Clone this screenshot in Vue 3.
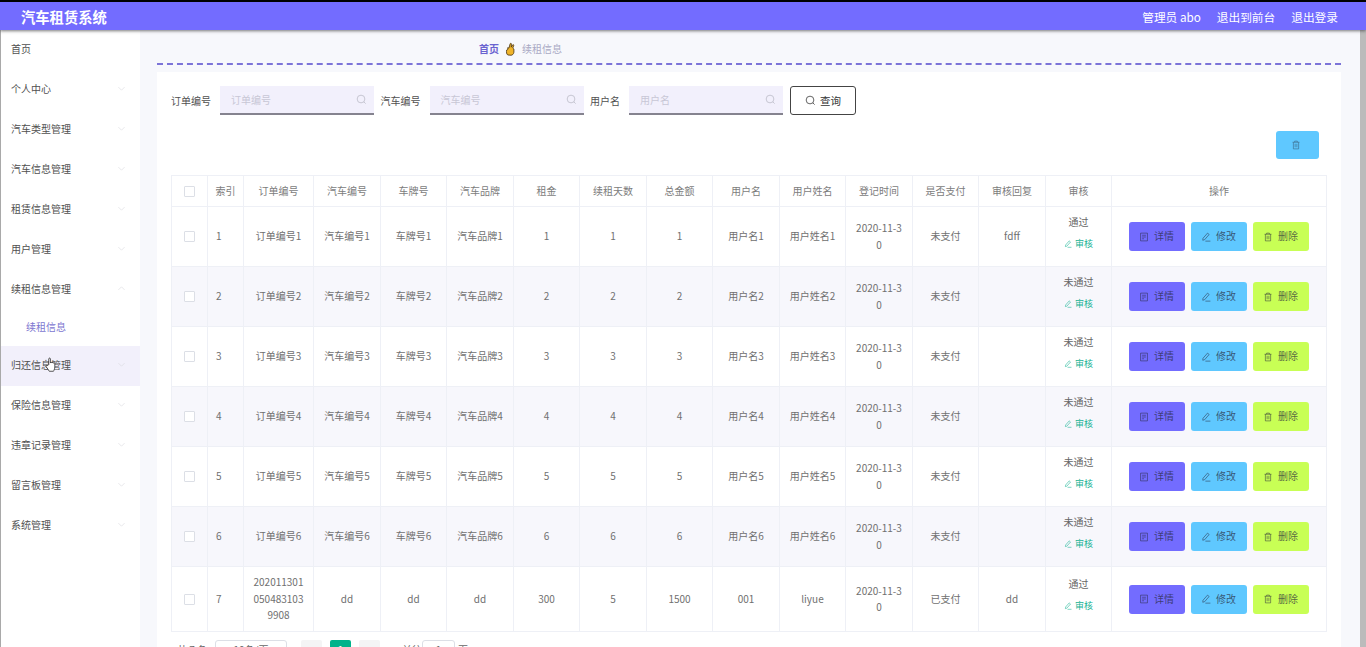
<script setup>
const menus = [
  { name: '首页', plain: true },
  { name: '个人中心' },
  { name: '汽车类型管理' },
  { name: '汽车信息管理' },
  { name: '租赁信息管理' },
  { name: '用户管理' },
  { name: '续租信息管理', open: true, sub: '续租信息' },
  { name: '归还信息管理', hover: true },
  { name: '保险信息管理' },
  { name: '违章记录管理' },
  { name: '留言板管理' },
  { name: '系统管理' }
]
const filters = [
  { label: '订单编号', width: '154px' },
  { label: '汽车编号', width: '154px' },
  { label: '用户名', width: '154px' }
]
const columns = ['索引', '订单编号', '汽车编号', '车牌号', '汽车品牌', '租金', '续租天数', '总金额', '用户名', '用户姓名', '登记时间', '是否支付', '审核回复', '审核']
const widths = [36, 36, 70, 67, 66, 67, 66, 67, 66, 67, 66, 67, 66, 67, 66, 215]
const rows = [1, 2, 3, 4, 5, 6].map((n) => ({
  cells: [n, `订单编号${n}`, `汽车编号${n}`, `车牌号${n}`, `汽车品牌${n}`, n, n, n, `用户名${n}`, `用户姓名${n}`, '2020-11-30', '未支付', n === 1 ? 'fdff' : ''],
  status: n === 1 ? '通过' : '未通过'
}))
rows.push({
  tall: true,
  cells: [7, '2020113010504831039908', 'dd', 'dd', 'dd', 300, 5, 1500, '001', 'liyue', '2020-11-30', '已支付', 'dd'],
  status: '通过'
})
const actions = [
  { label: '详情', icon: 'i-tickets', cls: 'purple' },
  { label: '修改', icon: 'i-edit', cls: 'sky' },
  { label: '删除', icon: 'i-delete', cls: 'lime' }
]
</script>

<template>
  <div class="page">
    <svg class="defs" width="0" height="0" aria-hidden="true">
      <symbol id="i-search" viewBox="0 0 16 16">
        <circle cx="7.3" cy="7.3" r="5.6" fill="none" stroke="currentColor" stroke-width="1.1" />
        <path d="M11.4 11.4 14 14" fill="none" stroke="currentColor" stroke-width="1.1" />
      </symbol>
      <symbol id="i-delete" viewBox="0 0 16 16">
        <path d="M2.500 3.600h11M5.800 3.600V1.800h4.400v1.800M3.800 3.600v10.600h8.400V3.600M6.600 6v5.600M9.400 6v5.600" fill="none" stroke="currentColor" stroke-width="1.1" />
      </symbol>
      <symbol id="i-tickets" viewBox="0 0 16 16">
        <path d="M2.500 1.800h11v12.400h-11zM5 5.200h6M5 8h6M5 10.800h3" fill="none" stroke="currentColor" stroke-width="1.1" />
      </symbol>
      <symbol id="i-edit" viewBox="0 0 16 16">
        <path d="M3.200 10 10.400 1.800l2.600 2.200-7.200 8.300-3 .9zM7 14.600h8" fill="none" stroke="currentColor" stroke-width="1.1" />
      </symbol>
      <symbol id="i-down" viewBox="0 0 16 16">
        <path d="M2.500 5.500 8 11l5.500-5.500" fill="none" stroke="currentColor" stroke-width="1" />
      </symbol>
    </svg>

    <header class="topbar">
      <div class="brand">汽车租赁系统</div>
      <div class="top-links">
        <span>管理员 abo</span>
        <span>退出到前台</span>
        <span>退出登录</span>
      </div>
    </header>

    <div class="body">
      <aside class="sidebar">
        <template v-for="m in menus" :key="m.name">
          <div class="menu-item" :class="{ hover: m.hover }">
            <span>{{ m.name }}</span>
            <svg v-if="!m.plain" class="chevron" :class="{ up: m.open }"><use href="#i-down" /></svg>
          </div>
          <div v-if="m.sub" class="sub-item">{{ m.sub }}</div>
        </template>
        <svg class="cursor" viewBox="0 0 16 20" width="12" height="19">
          <path d="M5 10V2.600c0-1.600 2.200-1.600 2.200 0V8c0-1 2-1 2 0 0-1 2-1 2 .2 0-.9 1.900-.8 1.900.5v4.500c0 2.500-1.300 4.800-1.800 5.800H5.700C5 17.600 2.900 14.800 1.600 13c-.9-1.400.9-2.800 2-1.500z" fill="#fff" stroke="#222" stroke-width="1" />
        </svg>
      </aside>

      <main class="main">
        <nav class="crumb">
          <span class="crumb-home">首页</span>
          <svg class="finger" viewBox="0 0 12 14" width="11" height="14">
            <path d="M3 13.500c-1.400-1-1.600-3-1.200-5.400L3 7.500V5.500l1.300.5L5.600 1.400c.3-1 1.500-.7 1.400.3L6.800 5l1.500-2.400c.6-.8 1.600-.2 1.200.7L8.500 6l1.200 1v3.500c-.2 2-1.700 3.300-3.200 3.300z" fill="#f0b429" stroke="#4a3410" stroke-width=".9" />
          </svg>
          <span class="crumb-current">续租信息</span>
        </nav>

        <section class="card">
          <form class="filters" @submit.prevent>
            <div v-for="f in filters" :key="f.label" class="filter">
              <label>{{ f.label }}</label>
              <div class="input" :style="{ width: f.width }">
                <span>{{ f.label }}</span>
                <svg class="input-icon"><use href="#i-search" /></svg>
              </div>
            </div>
            <button class="query" type="button">
              <svg><use href="#i-search" /></svg>查询
            </button>
          </form>

          <div class="tools">
            <button class="bulk-delete" type="button"><svg><use href="#i-delete" /></svg></button>
          </div>

          <table class="grid">
            <colgroup>
              <col v-for="(w, i) in widths" :key="i" :style="{ width: w + 'px' }" />
            </colgroup>
            <thead>
              <tr>
                <th><span class="check"></span></th>
                <th v-for="c in columns" :key="c">{{ c }}</th>
                <th>操作</th>
              </tr>
            </thead>
            <tbody>
              <tr v-for="(r, ri) in rows" :key="ri" :class="{ stripe: ri % 2 === 1, tall: r.tall }">
                <td><span class="check"></span></td>
                <td v-for="(c, ci) in r.cells" :key="ci" :class="{ idx: ci === 0 }">{{ c }}</td>
                <td>
                  <div class="status">{{ r.status }}</div>
                  <div class="audit"><svg><use href="#i-edit" /></svg>审核</div>
                </td>
                <td>
                  <div class="actions">
                    <button v-for="a in actions" :key="a.label" type="button" class="act" :class="a.cls">
                      <svg><use :href="'#' + a.icon" /></svg>{{ a.label }}
                    </button>
                  </div>
                </td>
              </tr>
            </tbody>
          </table>

          <div class="pager">
            <span class="total">共 7 条</span>
            <span class="size">10条/页</span>
            <span class="pg">‹</span>
            <span class="pg on">1</span>
            <span class="pg">›</span>
            <span class="goto">前往</span>
            <span class="jump">1</span>
            <span class="unit">页</span>
          </div>
        </section>
      </main>
      <div class="scrollbar"></div>
    </div>
  </div>
</template>

<style>
html, body { margin: 0; overflow: hidden; }
</style>

<style scoped>
.page {
  width: 1366px;
  height: 647px;
  overflow: hidden;
  display: flex;
  flex-direction: column;
  border-top: 2px solid #000;
  box-sizing: border-box;
  font-family: "Noto Sans CJK SC", "Noto Sans", sans-serif;
  font-size: 10px;
  color: #666;
  background: #f7f8fc;
}
.defs { position: absolute; }
svg { display: inline-block; }

.topbar {
  flex: 0 0 28px;
  display: flex;
  align-items: center;
  justify-content: space-between;
  padding: 0 28px 0 21px;
  background: #736cff;
  color: #fff;
  box-shadow: 0 1px 3px rgba(60, 60, 60, .7);
  position: relative;
  z-index: 2;
}
.brand { font-size: 14.300px; font-weight: 700; }
.top-links { display: flex; gap: 16px; font-size: 11.700px; }

.body { flex: 1; display: flex; min-height: 0; }

.sidebar {
  flex: 0 0 139px;
  border-left: 1px solid #a9a9a9;
  background: #fff;
  position: relative;
  color: #505050;
}
.menu-item {
  height: 40px;
  box-sizing: border-box;
  display: flex;
  align-items: center;
  justify-content: space-between;
  padding: 0 14px 3px 10px;
}
.menu-item.hover { background: #f2f0fb; }
.chevron { width: 9px; height: 9px; color: #d6d6dc; }
.chevron.up { transform: rotate(180deg); }
.sub-item {
  height: 36px;
  line-height: 34px;
  padding-left: 25px;
  color: #7d76d0;
}
.cursor { position: absolute; left: 44px; top: 325px; }

.main { flex: 1; min-width: 0; padding: 0 19px 0 17px; }

.crumb {
  height: 35px;
  box-sizing: border-box;
  border-bottom: 2px dashed #7c74d8;
  padding: 4px 0 0 322px;
  display: flex;
  align-items: center;
  gap: 6px;
}
.crumb-home { color: #6a63d0; font-weight: 700; }
.crumb-current { color: #a9a9c4; }

.card {
  margin-top: 7px;
  height: 600px;
  padding: 14px 14px 0;
  background: #fff;
}

.filters { display: flex; height: 29px; gap: 6.500px; }
.filter { display: flex; align-items: center; gap: 9px; color: #505050; }
.input {
  height: 29px;
  box-sizing: border-box;
  display: flex;
  align-items: center;
  justify-content: space-between;
  padding: 0 7px 0 11px;
  background: #f2f0fc;
  border-bottom: 2px solid #85838f;
  color: #c8c7d6;
}
.input-icon { width: 11px; height: 11px; color: #b9b9c4; }
.query {
  width: 66px;
  height: 29px;
  margin-left: .5px;
  box-sizing: border-box;
  padding: 0;
  display: flex;
  align-items: center;
  justify-content: center;
  gap: 4px;
  border: 1px solid #444;
  border-radius: 3px;
  background: #fff;
  color: #333;
  font: inherit;
  font-size: 10.500px;
}
.query svg { width: 11px; height: 11px; }

.tools { display: flex; justify-content: flex-end; padding: 16px 8px 16px 0; }
.bulk-delete {
  width: 43px;
  height: 28px;
  padding: 0 3px 0 0;
  display: flex;
  align-items: center;
  justify-content: center;
  border: 0;
  border-radius: 3px;
  background: #5fc8ff;
  color: #3f7090;
}
.bulk-delete svg { width: 10px; height: 10px; }

.grid {
  width: 1155px;
  table-layout: fixed;
  border-collapse: collapse;
  text-align: center;
  color: #707070;
}
.grid th, .grid td {
  border: 1px solid #eef0f6;
  padding: 0 8px;
  word-break: break-all;
  line-height: 16.500px;
}
.grid th:nth-child(2) { padding: 0 4px; }
.grid th { height: 30px; font-weight: 400; color: #7c7c7c; }
.grid td { height: 59px; }
.grid tr.tall td { height: 64px; }
.grid tr.stripe td { background: #f7f7fc; }
.grid td.idx { text-align: left; padding-left: 8px; }
.check {
  display: block;
  width: 9px;
  height: 9px;
  margin: 0 auto;
  border: 1px solid #dcdfe6;
  border-radius: 1px;
  background: #fff;
}
.status { color: #666; line-height: 16px; margin-bottom: 7px; }
.audit {
  display: flex;
  align-items: center;
  justify-content: center;
  gap: 3px;
  padding-bottom: 9px;
  color: #19b394;
  font-size: 9px;
  line-height: 14px;
}
.audit svg { width: 8px; height: 8px; }

.actions { display: flex; justify-content: center; gap: 6px; margin: 0 0 0 -1px; }
.act {
  width: 56px;
  height: 29px;
  padding: 0;
  display: flex;
  align-items: center;
  justify-content: center;
  gap: 5px;
  border: 0;
  border-radius: 3px;
  font: inherit;
  color: rgba(40, 40, 60, .72);
}
.act svg { width: 10px; height: 10px; }
.purple { background: #736cff; }
.sky { background: #5fc8ff; }
.lime { background: #c8ff55; }

.pager { display: flex; align-items: flex-start; margin-top: 8px; color: #666; }
.total { width: 44px; padding-left: 6px; box-sizing: border-box; }
.size {
  width: 72px;
  height: 26px;
  box-sizing: border-box;
  border: 1px solid #dcdfe6;
  border-radius: 3px;
  text-align: center;
  line-height: 18px;
}
.total, .goto, .unit { line-height: 20px; }
.pg {
  width: 21px;
  height: 26px;
  margin-left: 8px;
  text-align: center;
  line-height: 20px;
  border-radius: 2px;
  background: #f4f4f5;
}
.size + .pg { margin-left: 14px; }
.pg.on { background: #00b38a; color: #fff; }
.goto { margin-left: 22px; width: 20px; }
.jump {
  width: 33px;
  height: 26px;
  box-sizing: border-box;
  border: 1px solid #dcdfe6;
  border-radius: 3px;
  text-align: center;
  line-height: 18px;
}
.unit { margin-left: 3px; }

.scrollbar { flex: 0 0 6px; background: #bbb; }
</style>
